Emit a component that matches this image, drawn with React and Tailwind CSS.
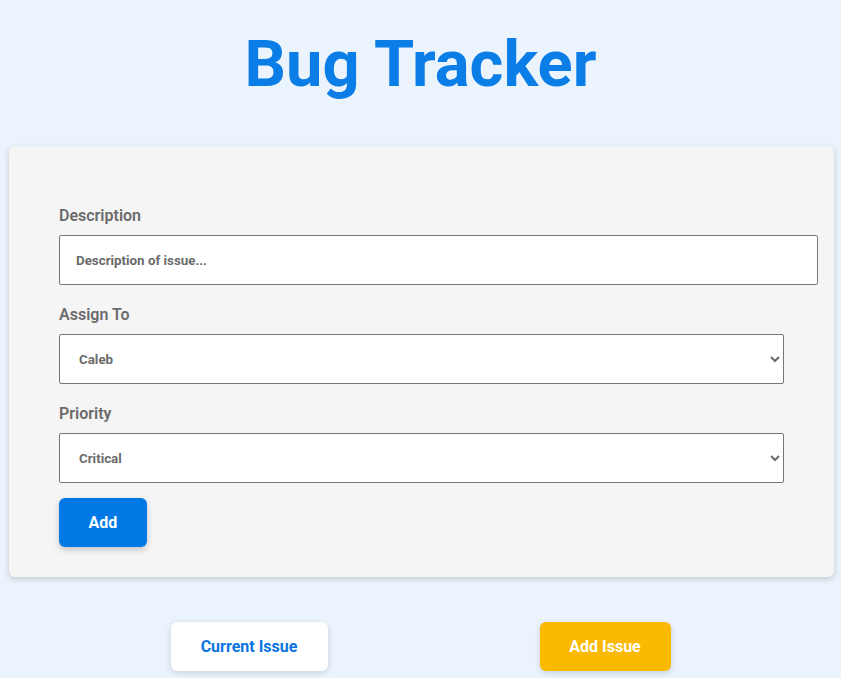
import { useState } from "react";

const App = () => {
  const [description, setDescription] = useState("");
  const [assignee, setAssignee] = useState("Caleb");
  const [priority, setPriority] = useState("Critical");

  return (
    <div className="min-h-screen bg-[#ebf3fc] font-['Roboto',sans-serif] pt-[27px] pb-10">
      <h1 className="text-center text-[65px] leading-[75px] font-bold text-[#0a7de6]">
        Bug Tracker
      </h1>

      {/* Formulario */}
      <form
        onSubmit={(e) => e.preventDefault()}
        className="mt-[44px] ml-[9px] w-[825px] bg-[#f5f5f5] rounded-md shadow-[0_2px_6px_rgba(0,0,0,0.18)] pt-[58px] pb-[30px] pl-[50px] pr-[16px]"
      >
        <label htmlFor="description" className="block text-base leading-6 font-semibold text-[#6b6b6b] mb-[7px]">
          Description
        </label>
        <input
          id="description"
          type="text"
          value={description}
          onChange={(e) => setDescription(e.target.value)}
          placeholder="Description of issue..."
          className="w-full h-[50px] px-4 bg-white border border-[#767676] rounded-[2px] text-[13.333px] font-bold text-[#6b6b6b] placeholder:text-[#6b6b6b] focus:outline-none"
        />

        <label htmlFor="assignee" className="block mt-[18px] text-base leading-6 font-semibold text-[#6b6b6b] mb-[7px]">
          Assign To
        </label>
        <select
          id="assignee"
          value={assignee}
          onChange={(e) => setAssignee(e.target.value)}
          className="w-[725px] h-[50px] pl-[15px] pr-2 bg-white border border-[#767676] rounded-[2px] text-[13.333px] font-bold text-[#6b6b6b] focus:outline-none"
        >
          <option>Caleb</option>
          <option>Anna</option>
          <option>Marcus</option>
        </select>

        <label htmlFor="priority" className="block mt-[18px] text-base leading-6 font-semibold text-[#6b6b6b] mb-[7px]">
          Priority
        </label>
        <select
          id="priority"
          value={priority}
          onChange={(e) => setPriority(e.target.value)}
          className="w-[725px] h-[50px] pl-[15px] pr-2 bg-white border border-[#767676] rounded-[2px] text-[13.333px] font-bold text-[#6b6b6b] focus:outline-none"
        >
          <option>Critical</option>
          <option>High</option>
          <option>Medium</option>
          <option>Low</option>
        </select>

        <div>
          <button
            type="submit"
            className="mt-[15px] w-[88px] h-[49px] rounded-md bg-[#0079e6] text-white text-base font-bold shadow-[0_3px_6px_rgba(0,0,0,0.2)]"
          >
            Add
          </button>
        </div>
      </form>

      <div className="mt-[45px] flex justify-center gap-[212px]">
        <button className="w-[157px] h-[49px] rounded-md bg-white text-[#0a74e0] text-base font-bold shadow-[0_2px_6px_rgba(0,0,0,0.15)]">
          Current Issue
        </button>
        <button className="w-[131px] h-[49px] rounded-md bg-[#fbb900] text-white text-base font-bold shadow-[0_2px_6px_rgba(0,0,0,0.15)]">
          Add Issue
        </button>
      </div>
    </div>
  );
};

export default App;
